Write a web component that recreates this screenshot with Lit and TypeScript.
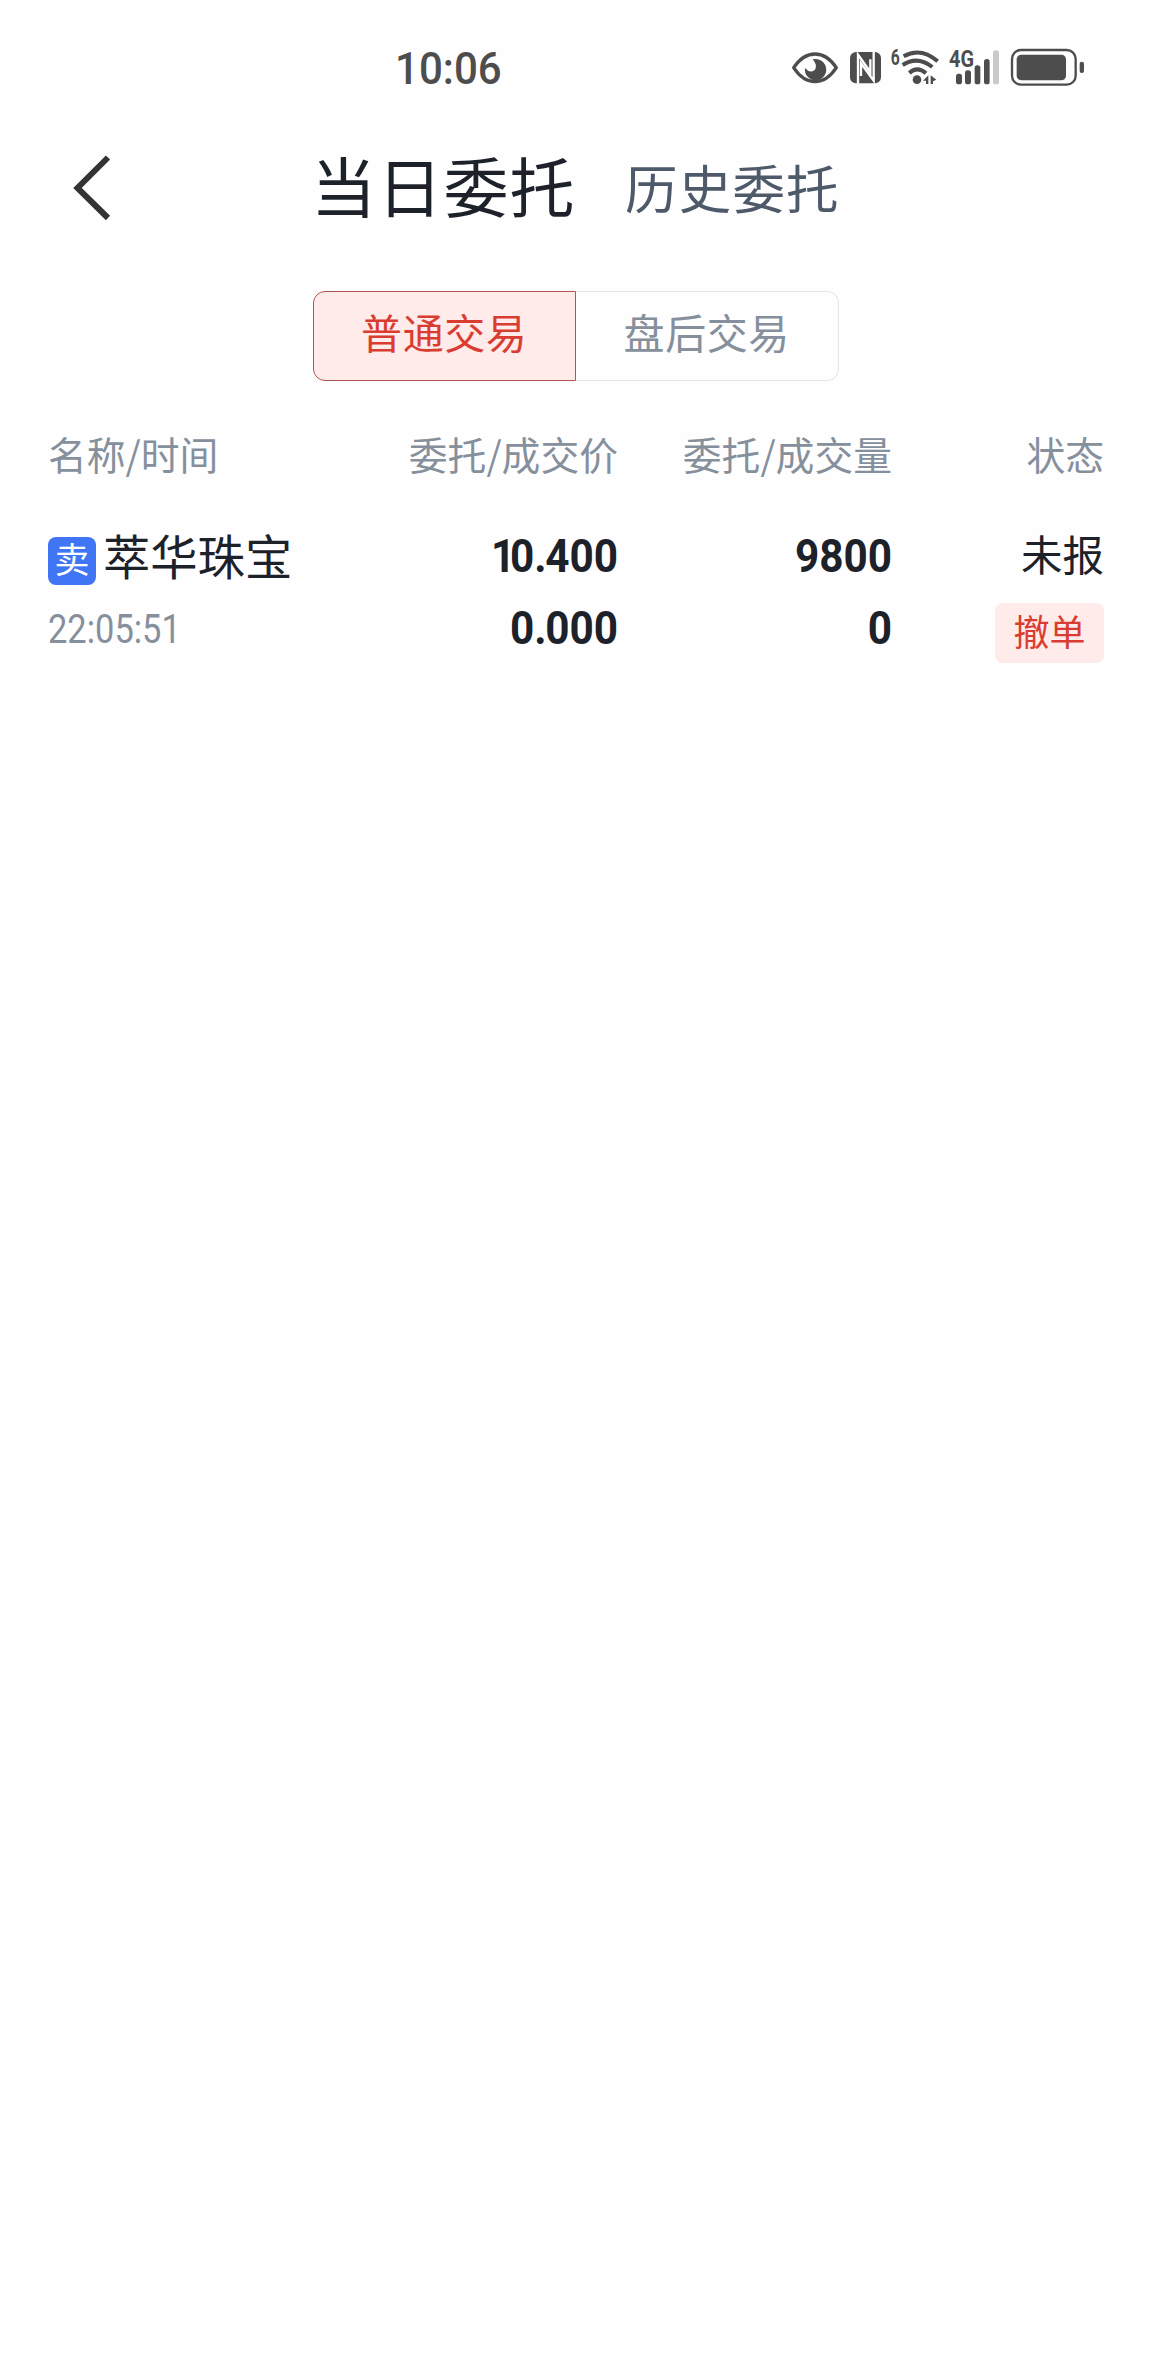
import { LitElement, html, css } from "lit";
import { customElement, property } from "lit/decorators.js";

interface Order {
  side: string;
  name: string;
  time: string;
  price: string;
  dealPrice: string;
  volume: string;
  dealVolume: string;
  status: string;
}

@customElement("status-bar")
class StatusBar extends LitElement {
  static styles = css`
    :host { display: flex; justify-content: space-between; height: 136px; box-sizing: border-box; padding: 48px 66px 0 395px; color: #4d4d4d; font-family: Roboto, sans-serif; }
    .clock { font-size: 45px; line-height: 41px; font-weight: 460; transform: scaleX(.935); transform-origin: left; }
    .icons { display: flex; height: 40px; }
    svg { display: block; overflow: visible; }
    .fill { fill: #4d4d4d; }
    .line { fill: none; stroke: #4d4d4d; }
    .cut { fill: none; stroke: #fefefe; }
    .dim { fill: #c9c9c9; }
    text { fill: #4d4d4d; font-family: Roboto, sans-serif; font-weight: 700; }
  `;
  render() {
    return html`
      <div class="clock">10:06</div>
      <div class="icons">
        <svg width="296" height="40" viewBox="0 0 888 120">
          <g transform="translate(-30 -24)">
            <path class="line" stroke-width="10" stroke-linejoin="round" d="M41 83C60 55 82 42 105 42C128 42 150 55 169 83C150 112 128 125 105 125C82 125 60 112 41 83Z"/>
            <path class="fill" d="M98 58A32 32 0 1 1 75 84Q90 102 104 90Q114 76 98 58Z"/>
            <rect class="fill" x="210" y="36" width="93" height="94" rx="18"/>
            <path class="cut" stroke-width="7" d="M234 131V44L271 96V58M281 35V122L243 70V108"/>
            <path class="line" stroke-width="12" d="M371 49Q422 20 473 64M368 75Q412 46 457 81M388 99Q412 77 438 100"/>
            <circle class="fill" cx="411" cy="119" r="13"/>
            <path class="fill" d="M429 122L445 106V132H438V122ZM452 106L469 119L459 124V132H452Z"/>
            <text x="332" y="75" font-size="66" textLength="27" lengthAdjust="spacingAndGlyphs">6</text>
          </g>
          <g transform="translate(420 -24)">
            <text x="57" y="82" font-size="69" textLength="75" lengthAdjust="spacingAndGlyphs">4G</text>
            <rect class="fill" x="78" y="101" width="18" height="32" rx="8"/>
            <rect class="fill" x="105" y="91" width="18" height="42" rx="8"/>
            <rect class="fill" x="134" y="76" width="17" height="57" rx="8"/>
            <rect class="fill" x="162" y="57" width="17" height="76" rx="8"/>
            <rect class="dim" x="189" y="31" width="18" height="102" rx="8"/>
            <rect class="line" x="246" y="30" width="191" height="104" rx="27" stroke-width="7"/>
            <rect class="fill" x="260" y="44" width="148" height="77" rx="14"/>
            <rect class="fill" x="449" y="65" width="13" height="34" rx="6"/>
          </g>
        </svg>
      </div>`;
  }
}

@customElement("nav-header")
class NavHeader extends LitElement {
  static styles = css`
    :host { display: flex; height: 104px; align-items: center; padding-left: 73px; white-space: nowrap; }
    .back { display: block; width: 40px; height: 68px; margin-right: 198px; }
    .current { font-size: 65px; letter-spacing: 1.2px; line-height: 96px; padding-bottom: 8px; color: #1d2129; margin-right: 51px; width: 263px; }
    .other { font-size: 52.5px; letter-spacing: 1.2px; line-height: 101px; padding-bottom: 3px; color: #4e5969; }
  `;
  render() {
    return html`
      <svg class="back" viewBox="0 0 40 68"><path d="M35 3.5L4.5 34L35 64" fill="none" stroke="#333" stroke-width="6"/></svg>
      <span class="current">当日委托</span>
      <span class="other">历史委托</span>`;
  }
}

@customElement("trade-tabs")
class TradeTabs extends LitElement {
  static styles = css`
    :host { display: flex; width: 526px; height: 90px; margin: 51px auto 0 312.5px; }
    .tab { box-sizing: border-box; flex: 1; font-size: 41px; letter-spacing: 0.6px; line-height: 79px; text-align: center; color: #86909c; border: 1.5px solid #e5e6eb; border-left: 0; border-radius: 0 12px 12px 0; }
    .active { color: #d93d32; background: #ffebe9; border: 1.5px solid #b05650; border-radius: 12px 0 0 12px; }
  `;
  render() {
    return html`<div class="tab active">普通交易</div><div class="tab">盘后交易</div>`;
  }
}

@customElement("order-table")
class OrderTable extends LitElement {
  @property({ attribute: false }) orders: Order[] = [];
  static styles = css`
    :host { display: block; padding: 2px 48px 0; color: #1d2129; white-space: nowrap; }
    .head, .row { display: grid; grid-template-columns: 296px 274px 274px 212px; text-align: right; }
    .head { padding-top: 46px; height: 90px; line-height: 48px; font-size: 38.8px; color: #86909c; }
    .left { text-align: left; }
    .name { display: flex; align-items: center; height: 72px; font-size: 47.3px; gap: 7px; line-height: 70px; }
    .side { width: 48px; height: 48px; line-height: 42px; margin-top: 12px; border-radius: 8px; background: #4076f6; color: #fff; font-size: 35px; text-align: center; }
    .num { font-family: Roboto, sans-serif; font-weight: 700; font-size: 47px; line-height: 74px; height: 72px; transform: scaleX(.9); transform-origin: right; }
    .one { letter-spacing: -6px; }
    .dot { letter-spacing: -1.5px; }
    .time { font-family: Roboto, sans-serif; font-weight: 400; font-size: 41.5px; line-height: 75px; color: #86909c; transform: scaleX(.83); transform-origin: left; }
    .state { font-size: 41.5px; line-height: 68px; height: 84px; }
    .cancel { width: 109px; height: 60px; margin-left: auto; line-height: 54px; border-radius: 8px; background: #ffebe9; color: #d93d32; font-size: 36px; text-align: center; }
  `;
  /* Tightens the advance of the narrow characters in a tabular figure. */
  private figure(value: string) {
    return [...value].map((c) =>
      c === "1" ? html`<span class="one">1</span>` : c === "." ? html`<span class="dot">.</span>` : c);
  }
  render() {
    return html`
      <div class="head">
        <span class="left">名称/时间</span><span>委托/成交价</span><span>委托/成交量</span><span>状态</span>
      </div>
      ${this.orders.map((o) => html`
        <div class="row">
          <div class="left">
            <div class="name"><span class="side">${o.side}</span><span>${o.name}</span></div>
            <div class="time">${o.time}</div>
          </div>
          <div><div class="num">${this.figure(o.price)}</div><div class="num">${this.figure(o.dealPrice)}</div></div>
          <div><div class="num">${this.figure(o.volume)}</div><div class="num">${this.figure(o.dealVolume)}</div></div>
          <div><div class="state">${o.status}</div><div class="cancel">撤单</div></div>
        </div>`)}`;
  }
}

@customElement("app-root")
class AppRoot extends LitElement {
  static styles = css`
    :host { display: flex; flex-direction: column; box-sizing: border-box; width: 1152px; height: 2376px; background: #fefefe; font-family: "Noto Sans CJK SC", sans-serif; }
  `;
  private orders: Order[] = [
    { side: "卖", name: "萃华珠宝", time: "22:05:51", price: "10.400", dealPrice: "0.000", volume: "9800", dealVolume: "0", status: "未报" },
  ];
  render() {
    return html`
      <status-bar></status-bar>
      <nav-header></nav-header>
      <trade-tabs></trade-tabs>
      <order-table .orders=${this.orders}></order-table>`;
  }
}
